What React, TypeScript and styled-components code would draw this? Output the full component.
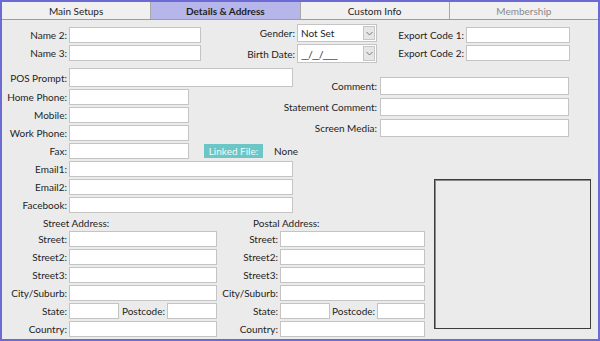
import styled, { createGlobalStyle } from 'styled-components'

const GlobalStyle = createGlobalStyle`
  html, body {
    margin: 0;
    padding: 0;
    background: #ebebeb;
  }
  body {
    font-family: Lato, "Liberation Sans", sans-serif;
    font-size: 10px;
    color: #1e1e1e;
  }
  * {
    box-sizing: border-box;
  }
`

const Window = styled.div`
  width: 600px;
  height: 341px;
  border: 2px solid #6b6bd3;
  background: #ebebeb;
  display: flex;
  flex-direction: column;
  overflow: hidden;
`

const TabBar = styled.div`
  display: flex;
  height: 18px;
  border-bottom: 1px solid #9c9c9c;
`

const Tab = styled.div<{ $active?: boolean; $disabled?: boolean }>`
  flex: 1;
  display: flex;
  align-items: center;
  justify-content: center;
  border-right: 1px solid #a8a8a8;
  background: ${p => (p.$active ? '#b6b6ea' : '#f0f0f0')};
  color: ${p => (p.$disabled ? '#8a8a8a' : '#1e1e1e')};
  font-weight: ${p => (p.$active ? 700 : 400)};
  &:last-child {
    border-right: none;
  }
`

const Body = styled.div`
  flex: 1;
  display: flex;
  flex-direction: column;
  padding-top: 4px;
`

const TopSection = styled.div`
  display: flex;
  align-items: flex-start;
`

const Group = styled.div<{ $gap: number; $left?: number; $top?: number }>`
  display: flex;
  flex-direction: column;
  gap: ${p => p.$gap}px;
  margin-left: ${p => p.$left || 0}px;
  margin-top: ${p => p.$top || 0}px;
`

const Row = styled.div<{ $gap?: number; $w?: number }>`
  display: flex;
  align-items: center;
  gap: ${p => (p.$gap === undefined ? 2 : p.$gap)}px;
  width: ${p => (p.$w ? `${p.$w}px` : 'auto')};
`

const Label = styled.label<{ $w?: number; $push?: boolean }>`
  flex-shrink: 0;
  display: flex;
  justify-content: flex-end;
  width: ${p => (p.$w ? `${p.$w}px` : 'auto')};
  margin-left: ${p => (p.$push ? 'auto' : '0')};
  white-space: nowrap;
`

const TextBox = styled.div<{ $w: number; $h?: number }>`
  flex-shrink: 0;
  width: ${p => p.$w}px;
  height: ${p => p.$h || 16}px;
  background: #fff;
  border: 1px solid #c4c4c4;
`

const Select = styled.div<{ $h: number }>`
  width: 80px;
  height: ${p => p.$h}px;
  background: #fff;
  border: 1px solid #c4c4c4;
  display: flex;
  align-items: center;
  padding-left: 3px;
`

const SelectText = styled.span`
  flex: 1;
  white-space: nowrap;
`

const DateMask = styled.span`
  flex: 1;
  letter-spacing: -1px;
  white-space: nowrap;
`

const ArrowButton = styled.div`
  width: 12px;
  align-self: stretch;
  margin: 1px;
  border: 1px solid #c6c6c6;
  background: #e6e6e6;
  display: flex;
  align-items: center;
  justify-content: center;
`

const Grid = styled.div`
  flex: 1;
  margin-top: 5px;
  display: grid;
  grid-template-columns: 298px 130px 1fr;
  grid-template-rows: 111px 36px 1fr;
  grid-template-areas:
    'left comments comments'
    'left . image'
    'addr addr image';
`

const LeftFields = styled.div`
  grid-area: left;
  display: flex;
  flex-direction: column;
  gap: 2px;
`

const Comments = styled.div`
  grid-area: comments;
  margin-top: 9px;
  display: flex;
  flex-direction: column;
  gap: 3px;
`

const LinkedButton = styled.div`
  margin-left: 13px;
  width: 59px;
  height: 14px;
  background: #6cc6c6;
  color: #eefafa;
  display: flex;
  align-items: center;
  justify-content: center;
  white-space: nowrap;
`

const NoneText = styled.span`
  margin-left: 9px;
`

const ImageBox = styled.div`
  grid-area: image;
  margin: 0 7px 10px 4px;
  border: 1px solid #3c3c3c;
  box-shadow: inset 1px 1px 0 #8a8a8a;
`

const AddressArea = styled.div`
  grid-area: addr;
  display: flex;
`

const AddressBlock = styled.div<{ $w: number }>`
  width: ${p => p.$w}px;
  display: flex;
  flex-direction: column;
  gap: 2px;
`

const AddressTitle = styled.div<{ $left: number }>`
  margin-left: ${p => p.$left}px;
  height: 14px;
  line-height: 16px;
`

const Chevron = () => (
  <svg width='7' height='5' viewBox='0 0 7 5'>
    <path d='M0.5 1 L3.5 4 L6.5 1' fill='none' stroke='#7a7a7a' strokeWidth='1' />
  </svg>
)

interface AddressProps {
  title: string
  titleLeft: number
  width: number
  labelW: number
  inputW: number
  codeW: number
}

function Address(props: AddressProps) {
  const { title, titleLeft, width, labelW, inputW, codeW } = props
  const rows = ['Street:', 'Street2:', 'Street3:', 'City/Suburb:']
  return (
    <AddressBlock $w={width}>
      <AddressTitle $left={titleLeft}>{title}</AddressTitle>
      {rows.map(r => (
        <Row key={r}>
          <Label $w={labelW}>{r}</Label>
          <TextBox $w={inputW} />
        </Row>
      ))}
      <Row $w={width}>
        <Label $w={labelW}>State:</Label>
        <TextBox $w={50} />
        <Label $push>Postcode:</Label>
        <TextBox $w={codeW} />
      </Row>
      <Row>
        <Label $w={labelW}>Country:</Label>
        <TextBox $w={inputW} />
      </Row>
    </AddressBlock>
  )
}

const App = () => {
  const phones = ['Home Phone:', 'Mobile:', 'Work Phone:']
  const emails = ['Email1:', 'Email2:', 'Facebook:']
  const comments = ['Comment:', 'Statement Comment:', 'Screen Media:']

  return (
    <Window>
      <GlobalStyle />
      <TabBar>
        <Tab>Main Setups</Tab>
        <Tab $active>Details &amp; Address</Tab>
        <Tab>Custom Info</Tab>
        <Tab $disabled>Membership</Tab>
      </TabBar>
      <Body>
        <TopSection>
          <Group $gap={2} $top={3}>
            <Row>
              <Label $w={65}>Name 2:</Label>
              <TextBox $w={132} />
            </Row>
            <Row>
              <Label $w={65}>Name 3:</Label>
              <TextBox $w={132} />
            </Row>
          </Group>
          <Group $gap={2} $left={34}>
            <Row>
              <Label $w={60}>Gender:</Label>
              <Select $h={18}>
                <SelectText>Not Set</SelectText>
                <ArrowButton><Chevron /></ArrowButton>
              </Select>
            </Row>
            <Row>
              <Label $w={60}>Birth Date:</Label>
              <Select $h={19}>
                <DateMask>__/__/____</DateMask>
                <ArrowButton><Chevron /></ArrowButton>
              </Select>
            </Row>
          </Group>
          <Group $gap={2} $left={22} $top={3}>
            <Row>
              <Label $w={65}>Export Code 1:</Label>
              <TextBox $w={104} />
            </Row>
            <Row>
              <Label $w={65}>Export Code 2:</Label>
              <TextBox $w={104} />
            </Row>
          </Group>
        </TopSection>

        <Grid>
          <LeftFields>
            <Row>
              <Label $w={65}>POS Prompt:</Label>
              <TextBox $w={224} $h={19} />
            </Row>
            {phones.map(p => (
              <Row key={p}>
                <Label $w={65}>{p}</Label>
                <TextBox $w={120} />
              </Row>
            ))}
            <Row>
              <Label $w={65}>Fax:</Label>
              <TextBox $w={120} />
              <LinkedButton>Linked File:</LinkedButton>
              <NoneText>None</NoneText>
            </Row>
            {emails.map(e => (
              <Row key={e}>
                <Label $w={65}>{e}</Label>
                <TextBox $w={224} />
              </Row>
            ))}
          </LeftFields>

          <Comments>
            {comments.map(c => (
              <Row key={c} $gap={3}>
                <Label $w={77}>{c}</Label>
                <TextBox $w={189} $h={18} />
              </Row>
            ))}
          </Comments>

          <ImageBox />

          <AddressArea>
            <Address title='Street Address:' titleLeft={41} width={215} labelW={65} inputW={148} codeW={50} />
            <Address title='Postal Address:' titleLeft={36} width={208} labelW={61} inputW={145} codeW={48} />
          </AddressArea>
        </Grid>
      </Body>
    </Window>
  )
}

export default App
